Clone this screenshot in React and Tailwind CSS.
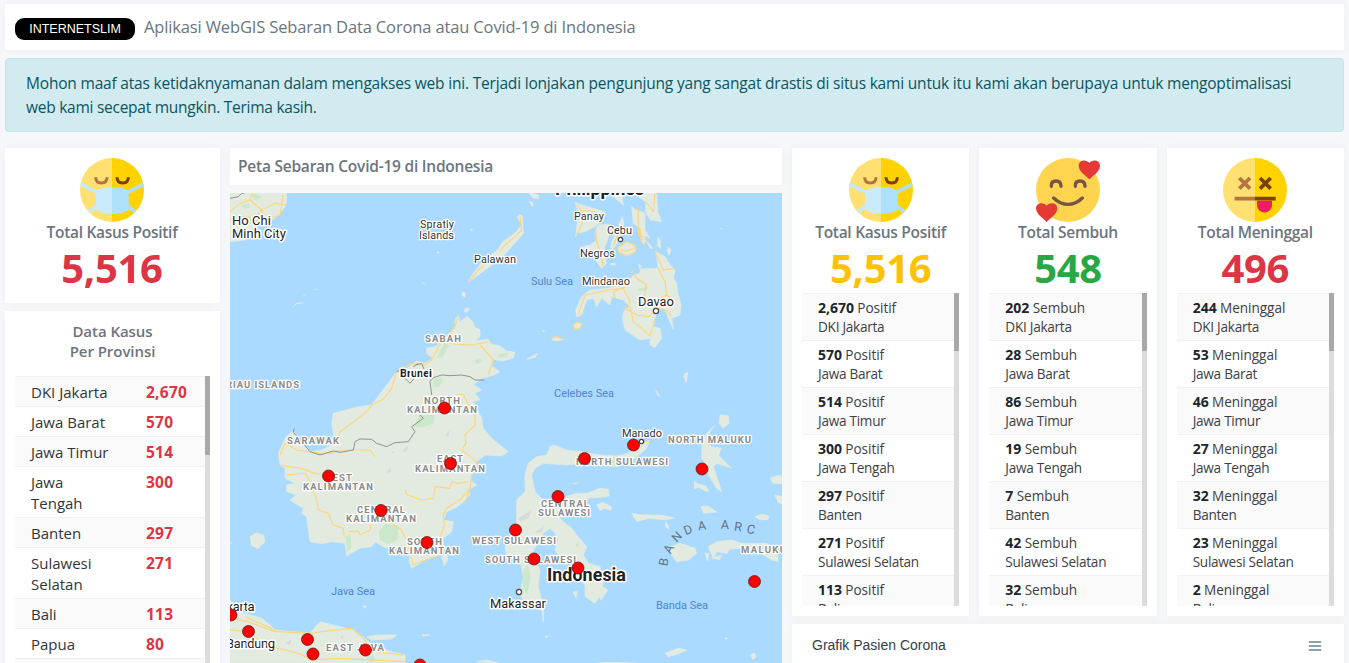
import React from "react";

const PROVINCES = [
  ["DKI Jakarta", "2,670"],
  ["Jawa Barat", "570"],
  ["Jawa Timur", "514"],
  ["Jawa Tengah", "300"],
  ["Banten", "297"],
  ["Sulawesi Selatan", "271"],
  ["Bali", "113"],
  ["Papua", "80"],
  ["Kalimantan Timur", "44"],
];

const NAMES = ["DKI Jakarta", "Jawa Barat", "Jawa Timur", "Jawa Tengah", "Banten", "Sulawesi Selatan", "Bali"];

const STATS = [
  { title: "Total Kasus Positif", total: "5,516", unit: "Positif", color: "text-[#ffc107]", Face: MaskFace, values: ["2,670", "570", "514", "300", "297", "271", "113"] },
  { title: "Total Sembuh", total: "548", unit: "Sembuh", color: "text-[#28a745]", Face: LoveFace, values: ["202", "28", "86", "19", "7", "42", "32"] },
  { title: "Total Meninggal", total: "496", unit: "Meninggal", color: "text-[#dc3545]", Face: DeadFace, values: ["244", "53", "46", "27", "32", "23", "2"] },
];

function MaskFace() {
  return (
    <svg className="block size-16" viewBox="0 0 192 192">
      <defs>
        <clipPath id="face"><circle cx="96" cy="96" r="96" /></clipPath>
      </defs>
      <g clipPath="url(#face)">
        <path fill="#ffe070" d="M0 0h96v192H0z" />
        <path fill="#ffd200" d="M96 0h96v192H96z" />
        <g fill="none" strokeWidth="11">
          <path stroke="#c6e9fc" d="M0 78L50 103M50 143L18 168" />
          <path stroke="#ace0fb" d="M192 78L142 103M142 143L174 168" />
        </g>
        <path fill="#c9ebfc" d="M96 87Q66 87 48 98V155Q68 168 96 168z" />
        <path fill="#ade1fc" d="M96 87Q126 87 146 98V155Q126 168 96 168z" />
      </g>
      <path fill="none" stroke="#b57440" strokeWidth="9" d="M47 58Q47 75 64 75T81 58" />
      <path fill="none" stroke="#7a4010" strokeWidth="9" d="M111 58Q111 75 128 75T145 58" />
    </svg>
  );
}

function LoveFace() {
  const heart = "M32 57C24 48 0 34 0 16C0-2 24-4 32 8C40-4 64-2 64 16C64 34 40 48 32 57z";
  return (
    <svg className="block size-16" viewBox="0 0 192 192">
      <circle cx="96" cy="96" r="96" fill="#ffd54f" />
      <g fill="none" stroke="#795548" strokeWidth="10" strokeLinecap="round">
        <path d="M46 85V83Q46 69 60 69T75 83V85M118 85V83Q118 69 132 69T147 83V85M53 120Q72 139 96 139T139 120" />
      </g>
      <path fill="#e53935" d={heart} transform="translate(128 7)" />
      <path fill="#e53935" d={heart} transform="translate(0 135)" />
    </svg>
  );
}

function DeadFace() {
  return (
    <svg className="block size-16" viewBox="0 0 192 192">
      <path fill="#ffe070" d="M96 0A96 96 0 0 0 96 192z" />
      <path fill="#ffd200" d="M96 0A96 96 0 0 1 96 192z" />
      <path fill="none" stroke="#b57440" strokeWidth="11" d="M49 60L81 92M81 60L49 92M35 122H96" />
      <path fill="none" stroke="#7a4010" strokeWidth="11" d="M111 60L143 92M143 60L111 92M96 122H158" />
      <path fill="#ee1d62" d="M102 128H147V141A22 22 0 0 1 102 141z" />
    </svg>
  );
}

/* Every coordinate of the map drawing is in thirds of a pixel. */
const LAND = [
  // Vietnam
  "M15 140H185V165L180 185L165 205L150 220L120 232L95 240L60 285L15 290z",
  // Palawan
  "M730 412L738 395L775 345L815 318L835 288L870 265L890 240L877 215L884 208L892 212L894 250L896 265L860 305L838 330L820 335L800 360L760 390z",
  // Borneo
  "M700 512L704 530L727 515L745 532L748 545L765 555L765 575L750 587L790 583L798 597L825 603L845 618L870 622L865 640L835 648L805 643L800 662L825 680L805 690L790 695L770 700L745 718L770 735L750 745L765 765L745 770L755 790L770 820L775 850L800 880L850 920L830 933L780 930L755 950L745 980L735 1005L755 1020L730 1035L735 1050L710 1075L690 1090L665 1100L655 1125L685 1130L680 1160L655 1180L655 1205L645 1230L600 1245L560 1270L553 1250L555 1220L530 1205L505 1215L475 1205L450 1190L440 1205L405 1210L365 1233L360 1195L320 1190L290 1196L255 1190L245 1115L230 1105L235 1090L210 1075L195 1065L215 1050L185 1040L185 1020L210 1015L180 1000L180 970L165 960L160 925L180 880L200 860L210 865L225 895L260 920L290 915L330 895L320 835L325 805L345 800L400 785L440 780L500 700L515 680L540 675L575 648L600 655L625 640L605 625L605 610L630 605L650 590L690 545L692 520z",
  "M712 440l8 4 0 12-8-4zM722 488l12 2-8 12-8-2zM650 1235l14-10 4 20-10 18z",
  // Luzon tail, Panay, Negros, Cebu, Bohol, Samar, Leyte
  "M910 142L940 150L942 160L925 160zM912 168l12 5-2 12zM1160 142L1190 142L1195 180L1170 160zM1220 142H1295L1298 200L1310 230L1275 225L1262 200L1262 170z",
  "M1050 172L1070 180L1105 190L1138 200L1138 215L1110 245L1080 260L1055 265L1052 275L1056 235L1062 210z",
  "M1120 240L1150 238L1160 250L1145 290L1135 320L1145 355L1130 370L1115 350L1110 335L1090 320L1065 308L1095 300L1115 285L1113 255z",
  "M1192 215L1197 235L1180 290L1155 325L1160 290z",
  "M1180 310L1205 292L1228 300L1232 318L1205 333L1182 322z",
  "M1220 185L1235 195L1260 205L1260 255L1275 280L1262 272L1258 300L1248 290L1245 250L1225 235z",
  "M1300 275l5 10 2 25-10-8zM1330 305l8 12-6 14-5-14zM1240 358l10 4-6 8zM1155 358l15-5 0 8zM1262 285l22 25-8 0z",
  // Mindanao
  "M1290 318L1320 335L1335 360L1350 375L1345 400L1355 415L1358 440L1368 480L1365 510L1340 520L1346 555L1335 530L1320 495L1300 490L1290 520L1285 545L1305 550L1310 580L1290 608L1275 600L1275 580L1245 585L1200 555L1192 520L1198 495L1215 485L1195 465L1160 455L1155 480L1130 460L1115 485L1105 460L1085 465L1070 510L1055 515L1052 495L1070 455L1095 435L1150 430L1215 410L1220 395L1248 382L1245 372L1300 370L1295 335z",
  "M1045 540l12-10 14 8-8 14-14 0zM980 580l14-5 22 8-14 4-18 0zM905 643l32-18-6 12zM1380 685l8-2-4 30-8-18zM1292 735l14 20-8-4z",
  // Sulawesi
  "M975 905L985 900L1025 915L1075 920L1125 930L1175 933L1210 925L1245 895L1275 885L1265 910L1225 945L1175 965L1075 955L1025 960L955 955L930 970L920 990L930 1040L955 1065L975 1075L990 1065L1055 1045L1085 1045L1125 1030L1150 1033L1153 1053L1125 1057L1090 1060L1065 1085L1045 1105L1015 1115L995 1110L1015 1130L1040 1150L1060 1175L1085 1205L1075 1230L1090 1255L1125 1265L1135 1310L1130 1345L1110 1375L1080 1355L1080 1320L1055 1295L1040 1260L1010 1245L990 1215L1000 1185L990 1165L975 1150L955 1165L940 1195L925 1215L930 1245L945 1275L940 1325L950 1365L956 1400L955 1430L951 1400L940 1372L895 1365L885 1345L895 1295L885 1245L845 1235L840 1205L855 1165L875 1135L875 1065L900 1040L900 990L910 955L935 935L965 930z",
  "M1115 1080l20-8 25 14-3 10-20-6-10 8zM1045 1340l12 0-4 20zM1118 1340l20-14 10 10-20 30z",
  // Java and its neighbours
  "M15 1400L60 1405L110 1420L135 1440L150 1455L255 1465L285 1430L305 1435L345 1445L385 1455L420 1480L440 1500L500 1520L540 1530V1555H15z",
  "M425 1475L460 1470L515 1470L500 1482L440 1485zM590 1468l25 2-20 4zM75 1175l20-12 22 8 2 20-20 20-20-10zM415 1382l10 2-6 6zM755 1550l30-5 40 10z",
  // Maluku
  "M1485 810L1510 812L1512 835L1495 850L1482 835zM1468 842L1455 860L1445 895L1460 905L1490 910L1480 930L1520 970L1475 955L1465 965L1490 1040L1475 1030L1450 990L1445 960L1430 940L1432 890L1445 865z",
  "M1408 1010l15 8 20 5 8 18-16-6-14-8-12 4zM1428 1085l20-2 28 18-40 4zM1220 1105l20 4 70 2 40 8-30 5-50-4-34 10zM1322 1130l8 12 2 12-10-10z",
  "M1335 1205L1365 1195L1410 1210L1415 1225L1390 1245L1355 1250L1340 1230zM1475 1190L1520 1185L1550 1195L1625 1195L1655 1220L1660 1250L1640 1245L1600 1220L1550 1210L1515 1212L1505 1225L1475 1220L1465 1240L1450 1205zM1440 1225l12 0-4 24zM1460 1240l30-10-6 14zM1590 1115l20-8 22 6-2 10-22 2zM1635 1000l20-8 20 0v25l-30-2zM1650 1050l30 6v22l-20-4z",
  // Nusa Tenggara and small islets
  "M1320 1525l40-15 25 5-20 10-35 10zM1575 1530l14-6 4 12-8 8zM1285 855l4 0-2 6zM1500 1478l8 2-5 4zM960 1475l8-4-2 8zM1110 1555l40-3 80 2 10 1z",
  "M0 1185l20 8-12 6zM735 252l8 2-4 5zM637 320l6 2-4 5zM592 414l8 2zM952 558l6-2-2 6zM1192 425l6 2zM1485 250l6 2z",
];

const FORESTS = [
  "M658 595l15 5-20 35-18 5zM750 645l15-5 8 12-20 6zM820 628l30-5-5 12-25 4zM625 705l20-10 10 10-15 20-15 0zM565 845l20-35 45 0-5 25-30 12z",
  "M462 1160l20-25 40 10-5 40-30 12-25-15zM362 1175l14-10 4 40-14 20zM895 1275l14-20 8 45-10 50-14-20zM1240 430l30-4-10 12-22 0zM1155 945l25-8 10 20-28 4zM1040 1015l25-6-14 10zM50 180l20-5 5 12-18 6zM80 150l12-4 20 12-24 6zM425 1535l20-6 4 18-14 6z",
];

const RELIEF = "M485 980l10-14 4 14-10 4zM660 870l14-14-4 20zM535 915l14-12-2 12-10 8zM500 920l10-2-8 10zM880 1120l40-24-10 24-24 10zM930 1160l30-16-14 20zM1050 1200l12-10-2 18zM180 1495l20-12-6 16zM345 1475l12-6-4 12z";

const ROADS = [
  "M15 200L45 175L75 165L110 195L90 220L40 245M75 165L85 142M110 195L150 175L185 180M110 195L120 225L165 210L175 150M15 225L60 215L90 220L100 235",
  "M732 410L760 375L795 345L815 335M825 320L840 300L870 275L890 255L885 215",
  "M440 780L475 762L500 730L515 680M530 675L560 655L600 660L620 645L640 605L655 590L690 545L700 515M650 592L705 598L745 600L790 590M765 600L805 645L790 690M695 750L715 748L730 780L750 800L750 840L720 870L722 895L710 915L755 950L740 990L735 1030L705 1065M735 1030L720 1075M710 1060L665 1090L655 1110L658 1140L645 1180L650 1210M700 1015L680 1010L675 1030L630 1025L625 1060L590 1065L545 1048L540 1033M700 1015L730 1010",
  "M440 780L430 795L380 835L345 860L335 890M165 960L230 970L270 985L310 990M180 990L240 985L250 1000L275 1065L280 1095L310 1105L325 1140L355 1150L358 1175M370 1160L400 1158L405 1170L435 1155L440 1120M480 1100L505 1140L530 1155L550 1200L565 1260L640 1230M165 930L180 895L215 915L290 925L320 925L345 915L435 915L450 935M20 1420L70 1430L150 1460L260 1465L290 1460L380 1450L410 1475L450 1520L535 1530M15 1455L70 1460L120 1500L220 1525L260 1545L345 1540L540 1550M60 1415L130 1445L150 1458L240 1465",
  "M1055 180L1075 205L1070 240L1055 270M1110 245L1115 290L1125 320L1135 365M1165 300L1190 240M1185 315L1205 318L1230 310M1240 190L1240 270L1265 280M1290 145L1285 200L1262 170M1258 300L1250 290L1245 250M1110 200L1070 195",
  "M1290 320L1315 375L1348 370M1300 370L1320 410L1325 450L1345 465M1220 375L1235 400L1265 420L1255 470L1300 465L1325 450M1060 510L1080 450L1150 435L1195 430L1215 470L1200 490L1235 510L1270 515L1295 490L1325 495L1340 515M1215 485L1225 530L1275 572L1290 520M1045 540l12-10 14 8-8 14-14 0zM980 580l14-5 22 8M1170 460L1165 440L1200 425",
  "M1250 890l25 0M1182 322l-5-12 28-20 27 12 0 18-25 14z",
];

const BORDERS = [
  "M15 160L40 155L50 145L65 142",
  "M208 850L205 862L235 895L255 920L285 930L325 918L345 922L385 915L390 890L405 882L440 883L455 895L485 905L510 893L550 890L570 860L560 845L595 820L585 810M620 750L615 710L625 698L650 690L675 692L710 690L735 695L750 705L778 705M575 660L590 655L597 672M515 680L530 675M540 700L555 715L568 700M565 665L580 655",
];

const LABELS = [
  ["Ho Chi", 232, 225, 39, "city"],
  ["Minh City", 232, 238, 54, "city"],
  ["Spratly", 420, 228, 34, "isle"],
  ["Islands", 419, 239, 35, "isle"],
  ["Palawan", 474, 263, 42, "isle"],
  ["Panay", 574, 220, 30, "isle"],
  ["Cebu", 607, 234, 25, "isle"],
  ["Negros", 580, 257, 35, "isle"],
  ["Mindanao", 582, 285, 48, "isle"],
  ["Davao", 638, 305.5, 36, "city"],
  ["Manado", 622, 437, 40, "isle"],
  ["Makassar", 490, 608, 56, "city"],
  ["Bandung", 226, 648, 49, "city"],
  ["Jakarta", 213.5, 611, 41, "city"],
  ["Philippines", 555, 195, 89, "country"],
  ["Indonesia", 547, 581, 79, "country"],
  ["Brunei", 400, 377, 32, "small"],
  ["SABAH", 425, 342, 36, "region"],
  ["RIAU ISLANDS", 226, 388, 73, "region"],
  ["NORTH", 424, 403.5, 36, "region"],
  ["KALIMANTAN", 407, 413, 70, "region"],
  ["SARAWAK", 287, 443.5, 52, "region"],
  ["EAST", 437, 461.5, 26, "region"],
  ["KALIMANTAN", 415, 471.5, 70, "region"],
  ["WEST", 323, 480.5, 29, "region"],
  ["KALIMANTAN", 303, 489.5, 70, "region"],
  ["CENTRAL", 357, 512.5, 48, "region"],
  ["KALIMANTAN", 346, 521.5, 70, "region"],
  ["SOUTH", 407, 544.5, 35, "region"],
  ["KALIMANTAN", 389, 553.5, 70, "region"],
  ["NORTH MALUKU", 668, 442.5, 83, "region"],
  ["NORTH SULAWESI", 576, 464.5, 92, "region"],
  ["CENTRAL", 541, 506.5, 48, "region"],
  ["SULAWESI", 538, 515.5, 52, "region"],
  ["WEST SULAWESI", 472, 543.5, 84, "region"],
  ["SOUTH SULAWESI", 485, 562.5, 91, "region"],
  ["MALUKU", 741, 552.5, 45, "region"],
  ["EAST JAVA", 326, 650.5, 58, "region"],
  ["Sulu Sea", 531, 285, 42, "sea"],
  ["Celebes Sea", 554, 397, 60, "sea"],
  ["Java Sea", 331, 595, 44, "sea"],
  ["Banda Sea", 656, 608.5, 52, "sea"],
];

const LABEL_STYLE = {
  city: "text-[13px] fill-[#202124] stroke-white stroke-[3px]",
  isle: "text-[11px] fill-[#303336] stroke-white stroke-[2.5px]",
  country: "text-[18px] font-bold fill-[#202124] stroke-white stroke-[3px]",
  small: "text-[11px] font-bold fill-[#202124] stroke-white stroke-[3px]",
  region: "text-[9.5px] font-bold fill-[#8a8a8a] stroke-white stroke-[2.5px]",
  sea: "text-[11px] fill-[#5085d0] stroke-transparent",
};

const ARC = [
  ["B", 664, 562, -80], ["A", 669, 549, -62], ["N", 677, 537, -45], ["D", 688, 530, -22], ["A", 702, 526, -8],
  ["A", 725, 525, 2], ["R", 738, 527, 8], ["C", 751, 529.5, 14],
];

const CASES = [
  [444.5, 408], [328.5, 476], [450.5, 463.5], [381, 510.5], [427, 542.5], [231, 615], [248.5, 631.5], [307.5, 639.5],
  [313, 654], [365.5, 650], [420, 665], [633.5, 445], [584.5, 458.5], [702, 469], [558, 496.5], [515.5, 530],
  [534, 559], [578, 568], [754.5, 581.5],
];

function CaseMap() {
  return (
    <svg className="block h-[470px] w-full bg-[#aadaff]" viewBox="230 193 552 470" fontFamily="Roboto, sans-serif">
      <g transform="translate(225 145) scale(.33333)" strokeLinejoin="round">
        {LAND.map((d, i) => <path key={i} d={d} fill="#e3ebe1" stroke="#e3ebe1" strokeWidth="2" />)}
        <path d="M205 485L215 475L235 474M235 452l8-4M270 434l8-2" fill="none" stroke="#e3ebe1" strokeWidth="3" />
        {FORESTS.map((d, i) => <path key={i} d={d} fill="#cbe8cb" />)}
        <path d={RELIEF} fill="#d6dcd5" />
        {ROADS.map((d, i) => <path key={i} d={d} fill="none" stroke="#fbd67c" strokeWidth="3.5" />)}
        {BORDERS.map((d, i) => <path key={i} d={d} fill="none" stroke="#8f948f" strokeWidth="3" />)}
      </g>
      {LABELS.map(([text, x, y, width, kind], i) => (
        <text key={i} x={x} y={y} textLength={width} className={LABEL_STYLE[kind]} paintOrder="stroke" strokeLinejoin="round">{text}</text>
      ))}
      {ARC.map(([letter, x, y, turn], i) => (
        <text key={i} textAnchor="middle" dy="4" transform={`translate(${x} ${y}) rotate(${turn})`} className="fill-[#64737f] text-[12.5px]">{letter}</text>
      ))}
      <g fill="#fff" stroke="#444" strokeWidth="1.2">
        <circle cx="620.5" cy="239.5" r="2.2" />
        <circle cx="656" cy="311" r="2.6" />
        <circle cx="641.5" cy="441.5" r="2.2" />
        <circle cx="519" cy="592" r="2.6" />
      </g>
      {CASES.map(([x, y], i) => <circle key={i} cx={x} cy={y} r="6" fill="#fe0000" stroke="#5b2020" strokeWidth=".8" />)}
    </svg>
  );
}

function Card({ className = "", children }) {
  return <section className={`bg-white shadow-[0_0_8px_rgba(60,60,130,0.045)] ${className}`}>{children}</section>;
}

function ScrollTrack({ children }) {
  return <div className="w-[5px] shrink-0 bg-[#dcdcdc]">{children}</div>;
}

function StatHead({ Face, title, total, color }) {
  return (
    <div className="flex flex-col items-center pt-[10px]">
      <Face />
      <h2 className="h-5 whitespace-nowrap text-[15.5px] leading-[20px] font-semibold tracking-[-0.29px] text-[#6c757d]">{title}</h2>
      <p className={`h-[51px] text-[40px] leading-[52px] font-bold tracking-[-0.3px] ${color}`}>{total}</p>
    </div>
  );
}

function StatCard({ title, total, unit, color, Face, values }) {
  return (
    <Card className="h-[468px] px-[10px]">
      <StatHead Face={Face} title={title} total={total} color={color} />
      <div className="flex h-[313px] overflow-hidden">
        <ul className="h-max flex-1">
          {values.map((value, i) => (
            <li key={NAMES[i]} className="h-[47px] border-t border-[#f0f1f4] pt-1 pl-4 text-[13.6px] leading-[19px] tracking-[-0.2px] whitespace-nowrap text-[#3c4146] odd:bg-[#fafafa]">
              <p><b className="text-[14px] tracking-normal text-[#212529]">{value}</b>{" "}<span className="tracking-[-0.05px]">{unit}</span></p>
              <p className="tracking-[-0.27px]">{NAMES[i]}</p>
            </li>
          ))}
        </ul>
        <ScrollTrack><div className="h-[58px] bg-[#a9a9a9]" /></ScrollTrack>
      </div>
    </Card>
  );
}

export default function App() {
  return (
    <main className="flex h-[663px] flex-col overflow-hidden bg-[#f6f7fa] px-[5px] pt-1 font-['Open_Sans','Noto_Sans',sans-serif]">
      <Card className="flex h-[46px] shrink-0 items-center gap-[9px] pl-[10px]">
        <span className="mt-[3px] flex h-[22px] w-[120px] items-center justify-center rounded-[9px] bg-black pt-px font-['Liberation_Sans',sans-serif] text-[12.5px] text-white">INTERNETSLIM</span>
        <h1 className="text-[16.5px] tracking-[-0.14px] text-[#6c757d]">Aplikasi WebGIS Sebaran Data Corona atau Covid-19 di Indonesia</h1>
      </Card>

      <div className="mt-2 h-[74px] shrink-0 rounded-[4px] border border-[#bee5eb] bg-[#d1ebf0] px-5 py-3 text-[15.5px] leading-6 tracking-[-0.19px] text-[#0c5460]">
        <p>Mohon maaf atas ketidaknyamanan dalam mengakses web ini. Terjadi lonjakan pengunjung yang sangat drastis di situs kami untuk itu kami akan berupaya untuk mengoptimalisasi</p>
        <p className="tracking-[-0.26px]">web kami secepat mungkin. Terima kasih.</p>
      </div>

      <div className="mt-4 flex shrink-0 gap-[10px]">
        <div className="flex w-[215px] shrink-0 flex-col gap-2">
          <Card className="h-[155px] pr-px">
            <StatHead Face={MaskFace} title="Total Kasus Positif" total="5,516" color="text-[#dc3545]" />
          </Card>
          <Card className="h-[370px] px-[10px] pt-[10px]">
            <h2 className="h-[55px] text-center text-[15px] leading-[20px] font-semibold tracking-[-0.05px] text-[#6c757d]">Data Kasus<br />Per Provinsi</h2>
            <div className="flex h-[300px] overflow-hidden">
              <ul className="h-max flex-1">
                {PROVINCES.map(([name, count]) => (
                  <li key={name} className="grid grid-cols-[115px_1fr] border-t border-[#f0f1f4] pt-[5px] pb-[3px] pl-4 text-[15px] leading-[21px] odd:bg-[#fafafa]">
                    <span className="max-w-[82px] text-[#30363b]">{name}</span>
                    <b className="text-[15.5px] tracking-[0.25px] text-[#dc3545]">{count}</b>
                  </li>
                ))}
              </ul>
              <ScrollTrack><div className="h-[79px] bg-[#a9a9a9]" /></ScrollTrack>
            </div>
          </Card>
        </div>

        <div className="flex w-[552px] shrink-0 flex-col gap-2">
          <Card className="flex h-[37px] items-center pl-2">
            <h2 className="text-[15.5px] font-semibold tracking-[-0.23px] text-[#6c757d]">Peta Sebaran Covid-19 di Indonesia</h2>
          </Card>
          <CaseMap />
        </div>

        <div className="flex flex-1 flex-col gap-2">
          <div className="grid grid-cols-3 gap-[10px]">
            {STATS.map((stat) => <StatCard key={stat.title} {...stat} />)}
          </div>
          <Card className="flex h-16 items-start justify-between pt-3 pr-[22px] pl-5">
            <h2 className="font-['Liberation_Sans',sans-serif] text-[14px] leading-[19px] text-[#373d3f]">Grafik Pasien Corona</h2>
            <svg className="mt-[4px] h-3 w-[14px]" viewBox="0 0 14 12" stroke="#6e8192" strokeWidth="1.3">
              <path d="M.8 2h12.4M.8 6h12.4M.8 10h12.4" />
            </svg>
          </Card>
        </div>
      </div>
    </main>
  );
}
